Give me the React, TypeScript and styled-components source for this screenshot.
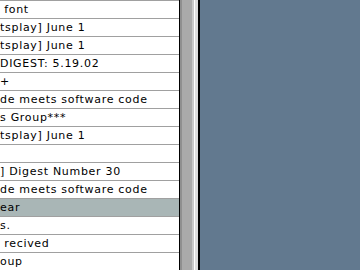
import React from 'react';
import styled, { createGlobalStyle } from 'styled-components';

const GlobalStyle = createGlobalStyle`
  html, body {
    margin: 0;
    padding: 0;
    overflow: hidden;
  }
  #root {
    height: 270px;
  }
`;

const Window = styled.div`
  display: flex;
  width: 360px;
  height: 270px;
  background-color: #62798f;
`;

const ListPane = styled.div`
  width: 179px;
  height: 100%;
  background-color: #fff;
  border-right: 1px solid #000;
  overflow: hidden;
  display: flex;
  flex-direction: column;
`;

const Row = styled.div<{ selected?: boolean }>`
  flex: 0 0 17px;
  border-top: 1px solid #a0a0a0;
  background-color: ${(p) => (p.selected ? '#a9b6b6' : '#fff')};
  color: #000;
  font-family: 'DejaVu Sans', Verdana, sans-serif;
  font-size: 11px;
  letter-spacing: 0.7px;
  line-height: 17px;
  white-space: pre;
  overflow: hidden;
`;

const Track = styled.div`
  width: 14px;
  height: 100%;
  background: linear-gradient(
    to right,
    #8f8f8f 0,
    #8f8f8f 2px,
    #aaaaaa 2px,
    #aaaaaa 12px,
    #c8c8c8 12px
  );
`;

const Splitter = styled.div`
  width: 6px;
  height: 100%;
  background: linear-gradient(
    to right,
    #ffffff 0,
    #ffffff 1px,
    #dcdcdc 1px,
    #dcdcdc 4px,
    #000000 4px
  );
`;

const Desktop = styled.div`
  flex: 1;
  height: 100%;
  background-color: #62798f;
`;

const messages = [
  ' font',
  'tsplay] June 1',
  'tsplay] June 1',
  'DIGEST: 5.19.02',
  '+',
  'de meets software code',
  's Group***',
  'tsplay] June 1',
  '',
  '] Digest Number 30',
  'de meets software code',
  'ear',
  's.',
  ' recived',
  'oup',
];

const App: React.FC = () => {
  return (
    <>
      <GlobalStyle />
      <Window>
        <ListPane>
          {messages.map((m, i) => (
            <Row key={i} selected={i === 11}>
              {m}
            </Row>
          ))}
        </ListPane>
        <Track />
        <Splitter />
        <Desktop />
      </Window>
    </>
  );
};

export default App;
